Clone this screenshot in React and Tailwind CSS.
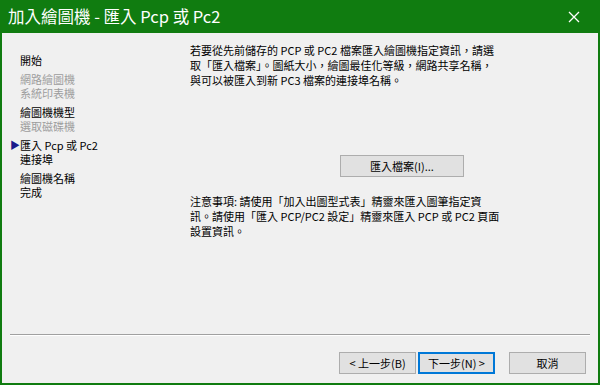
import React from 'react';

const steps = [
  [{ label: '開始' }],
  [
    { label: '網路繪圖機', disabled: true },
    { label: '系統印表機', disabled: true },
  ],
  [
    { label: '繪圖機機型' },
    { label: '選取磁碟機', disabled: true },
  ],
  [
    { label: '匯入 Pcp 或 Pc2', current: true },
    { label: '連接埠' },
  ],
  [
    { label: '繪圖機名稱' },
    { label: '完成' },
  ],
];

const font = { fontFamily: '"Noto Sans CJK TC", "Noto Sans", sans-serif' };

const WinButton = ({ children, primary }) => (
  <button
    className={
      'h-[22px] w-[77px] text-[11px] leading-none text-black bg-[#e1e1e1] ' +
      (primary ? 'border-2 border-[#0078d7]' : 'border border-[#adadad]')
    }
  >
    {children}
  </button>
);

export default function App() {
  return (
    <div className="w-[600px] h-[385px] bg-[#107c10] flex flex-col" style={font}>
      <div className="h-[33px] shrink-0 flex items-center justify-between pl-[8px] pr-[18px] text-white">
        <span className="text-[16.5px] leading-none">加入繪圖機 - 匯入 Pcp 或 Pc2</span>
        <svg width="12" height="12" viewBox="0 0 12 12" className="mr-[2px]">
          <path d="M1 1 L11 11 M11 1 L1 11" stroke="white" strokeWidth="1.3" />
        </svg>
      </div>
      <div className="flex-1 mx-[2px] mb-[2px] bg-[#f0f0f0] flex flex-col text-[11px] leading-[14px] text-black">
        <div className="flex-1 flex">
          <div className="w-[188px] pt-[20px] pl-[18px] flex flex-col gap-[5px]">
            {steps.map((group, i) => (
              <div key={i} className="flex flex-col">
                {group.map((s) => (
                  <div key={s.label} className="relative h-[14px]">
                    {s.current && (
                      <span className="absolute left-[-10px] top-[1px] text-[#1a1a8c] text-[10px] leading-[12px]">▶</span>
                    )}
                    <span className={s.disabled ? 'text-[#9d9d9d]' : 'text-black'}>{s.label}</span>
                  </div>
                ))}
              </div>
            ))}
          </div>
          <div className="flex-1 pt-[10px] flex flex-col">
            <p className="leading-[15px] whitespace-nowrap">
              若要從先前儲存的 PCP 或 PC2 檔案匯入繪圖機指定資訊，請選
              <br />
              取「匯入檔案」。圖紙大小，繪圖最佳化等級，網路共享名稱，
              <br />
              與可以被匯入到新 PC3 檔案的連接埠名稱。
            </p>
            <div className="mt-[67px] pl-[150px]">
              <button className="h-[22px] w-[124px] bg-[#e1e1e1] border border-[#adadad] text-[11px] leading-none">
                匯入檔案(I)...
              </button>
            </div>
            <p className="mt-[17px] leading-[15px] whitespace-nowrap">
              注意事項: 請使用「加入出圖型式表」精靈來匯入圖筆指定資
              <br />
              訊。請使用「匯入 PCP/PC2 設定」精靈來匯入 PCP 或 PC2 頁面
              <br />
              設置資訊。
            </p>
          </div>
        </div>
        <div className="mx-[8px] h-[2px] border-t border-[#a0a0a0] border-b border-b-white" />
        <div className="h-[47px] flex items-start justify-end pt-[16px] pr-[12px]">
          <div className="flex gap-[2px]">
            <WinButton>&lt; 上一步(B)</WinButton>
            <WinButton primary>下一步(N) &gt;</WinButton>
          </div>
          <div className="ml-[14px]">
            <WinButton>取消</WinButton>
          </div>
        </div>
      </div>
    </div>
  );
}
